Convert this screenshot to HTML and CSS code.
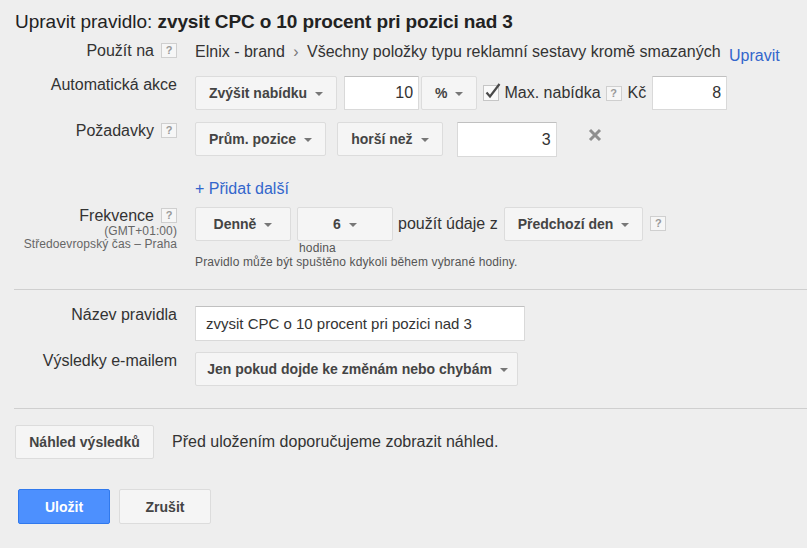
FILE: index.html
```html
<!DOCTYPE html>
<html lang="cs">
<head>
<meta charset="utf-8">
<title>Upravit pravidlo</title>
<link rel="stylesheet" href="styles.css">
</head>
<body>
<div class="page">
  <h1 class="title">Upravit pravidlo: <b>zvysit CPC o 10 procent pri pozici nad 3</b></h1>

  <div class="row row-apply">
    <div class="label">Použít na <span class="help">?</span></div>
    <div class="field text">Elnix - brand <span class="sep">›</span> Všechny položky typu reklamní sestavy kromě smazaných <a class="link link-edit" href="#">Upravit</a></div>
  </div>

  <div class="row row-action">
    <div class="label">Automatická akce</div>
    <div class="field controls center">
      <button class="btn drop">Zvýšit nabídku<span class="caret"></span></button>
      <input class="inp inp-s gap-l7" value="10">
      <button class="btn drop btn-pct">%<span class="caret"></span></button>
      <span class="check">
        <svg width="16" height="20" viewBox="0 0 16 20" overflow="visible"><rect x="0.5" y="3.5" width="15" height="15" fill="#fafafa" stroke="#c6c6c6"/><path d="M3.5 10.5 L7 14.5 L16.5 2" fill="none" stroke="#4a4a4a" stroke-width="2.2"/></svg>
      </span>
      <span class="text">Max. nabídka</span>
      <span class="help help-inline">?</span>
      <span class="text kc">Kč</span>
      <input class="inp inp-s" value="8">
    </div>
  </div>

  <div class="row row-req">
    <div class="label">Požadavky <span class="help">?</span></div>
    <div class="field controls">
      <button class="btn drop">Prům. pozice<span class="caret"></span></button>
      <button class="btn drop gap-l11">horší než<span class="caret"></span></button>
      <input class="inp inp-m" value="3">
      <span class="remove">
        <svg width="14" height="14" viewBox="0 0 14 14"><path d="M2 2 L12 12 M12 2 L2 12" stroke="#8e8e8e" stroke-width="3"/></svg>
      </span>
    </div>
  </div>

  <div class="row row-add">
    <div></div>
    <div class="field"><a class="link" href="#">+ Přidat další</a></div>
  </div>

  <div class="row row-freq">
    <div class="label label-stack">
      <div class="label-main">Frekvence <span class="help">?</span></div>
      <div class="tz">(GMT+01:00)</div>
      <div class="tz">Středoevropský čas – Praha</div>
    </div>
    <div class="field">
      <div class="controls">
        <button class="btn drop wide">Denně<span class="caret"></span></button>
        <div class="stack">
          <button class="btn drop wide">6<span class="caret"></span></button>
          <span class="small hour">hodina</span>
        </div>
        <span class="text tall">použít údaje z</span>
        <button class="btn drop">Předchozí den<span class="caret"></span></button>
        <span class="help help-freq">?</span>
      </div>
      <div class="small note">Pravidlo může být spuštěno kdykoli během vybrané hodiny.</div>
    </div>
  </div>

  <div class="divider"></div>

  <div class="row row-name">
    <div class="label">Název pravidla</div>
    <div class="field"><input class="inp inp-name" value="zvysit CPC o 10 procent pri pozici nad 3"></div>
  </div>

  <div class="row row-email">
    <div class="label">Výsledky e-mailem</div>
    <div class="field"><button class="btn drop btn-email">Jen pokud dojde ke změnám nebo chybám<span class="caret"></span></button></div>
  </div>

  <div class="divider divider-2"></div>

  <div class="preview">
    <button class="btn">Náhled výsledků</button>
    <span class="text">Před uložením doporučujeme zobrazit náhled.</span>
  </div>

  <div class="actions">
    <button class="btn btn-primary">Uložit</button>
    <button class="btn btn-cancel">Zrušit</button>
  </div>
</div>
</body>
</html>
```

FILE: styles.css
```css
* { box-sizing: border-box; }

html, body {
  margin: 0;
  background: #eeeeee;
}

body {
  font-family: "Liberation Sans", Arial, sans-serif;
  color: #333;
  font-size: 16px;
}

.page {
  padding: 11px 0 0 15px;
  width: 807px;
  height: 548px;
  overflow: hidden;
}

.title {
  margin: 0;
  font-size: 19px;
  line-height: 22px;
  font-weight: normal;
  color: #222;
  white-space: nowrap;
}
.title b {
  font-weight: bold;
  letter-spacing: -0.12px;
}

.row {
  display: grid;
  grid-template-columns: 162px 1fr;
  column-gap: 18px;
}

.label {
  display: flex;
  justify-content: flex-end;
  align-items: flex-start;
  gap: 7px;
  line-height: 18px;
  color: #333;
  white-space: nowrap;
}

.label-stack {
  flex-direction: column;
  justify-content: flex-start;
  align-items: flex-end;
  gap: 0;
}
.label-main {
  display: flex;
  gap: 7px;
  align-items: flex-start;
}
.tz {
  font-size: 12px;
  line-height: 13px;
  letter-spacing: 0.1px;
  color: #666;
}

.help {
  display: inline-flex;
  align-items: center;
  justify-content: center;
  width: 16px;
  height: 15px;
  margin-top: 1px;
  border: 1px solid #cfcfcf;
  background: #f6f6f6;
  color: #999;
  font-size: 11px;
  font-weight: bold;
  line-height: 1;
}

.text { white-space: nowrap; }

.field.text {
  line-height: 20px;
  height: 20px;
}

.sep {
  color: #777;
  margin: 0 4px;
}

.link {
  color: #3366cc;
  text-decoration: none;
}
.link-edit {
  display: inline-block;
  margin-left: 4px;
  transform: translateY(4px);
}

.controls {
  display: flex;
  align-items: flex-start;
  white-space: nowrap;
}
.controls.center { align-items: center; }

.btn {
  font-family: "Liberation Sans", Arial, sans-serif;
  display: inline-flex;
  align-items: center;
  justify-content: center;
  height: 34px;
  padding: 0 13px;
  border: 1px solid #dcdcdc;
  border-radius: 2px;
  background: #f5f5f5;
  color: #444;
  font-size: 14px;
  font-weight: bold;
  white-space: nowrap;
  cursor: pointer;
}

.btn.wide { min-width: 96px; }

.caret {
  display: inline-block;
  width: 0;
  height: 0;
  margin-left: 8px;
  margin-top: 2px;
  border-top: 4px solid #777;
  border-left: 4px solid transparent;
  border-right: 4px solid transparent;
}

.inp {
  height: 34px;
  border: 1px solid #d9d9d9;
  border-top-color: #c0c0c0;
  background: #fff;
  font-family: "Liberation Sans", Arial, sans-serif;
  font-size: 16px;
  color: #333;
  padding: 0 5px;
  text-align: right;
  border-radius: 1px;
}

.inp-s { width: 75px; }
.inp-m { width: 100px; height: 35px; margin-left: 14px; }
.gap-l7 { margin-left: 7px; }
.gap-l11 { margin-left: 11px; }
.btn-pct { margin-left: 2px; }

.check {
  display: inline-flex;
  margin-left: 6px;
  margin-right: 5px;
  margin-top: -2px;
}
.check svg { overflow: visible; }

.help-inline { margin: 0 6px 0 5px; }
.kc { margin-right: 6px; }

.remove {
  display: inline-flex;
  margin-left: 31px;
  margin-top: 6px;
}

.row-apply { margin-top: 9px; }
.row-action { margin-top: 14px; }
.row-req { margin-top: 12px; }
.row-add { margin-top: 22px; line-height: 20px; }
.row-freq { margin-top: 8px; }

.stack {
  display: flex;
  flex-direction: column;
  margin-left: 6px;
}
.small {
  font-size: 12px;
  line-height: 14px;
  letter-spacing: 0.14px;
  color: #555;
}
.hour { padding-left: 2px; }
.tall {
  line-height: 34px;
  margin: 0 6px 0 5px;
}
.help-freq { margin-left: 7px; margin-top: 9px; }

.divider {
  height: 1px;
  background: #cfcfcf;
  margin: 20px 0 0 -1px;
}

.row-name { margin-top: 16px; }
.inp-name {
  width: 330px;
  height: 35px;
  text-align: left;
  padding: 0 10px;
  font-size: 15px;
}

.row-email { margin-top: 11px; }
.btn-email {
  width: 323px;
  padding: 0 12px 0 14px;
}

.divider-2 { margin-top: 22px; }

.preview {
  display: flex;
  align-items: center;
  gap: 18px;
  margin-top: 16px;
}
.preview .btn { width: 139px; }

.actions {
  display: flex;
  gap: 9px;
  margin-top: 30px;
  margin-left: 3px;
}
.actions .btn {
  width: 92px;
  height: 35px;
}
.btn-primary {
  background: #4d90fe;
  border-color: #3079ed;
  color: #fff;
}
```
